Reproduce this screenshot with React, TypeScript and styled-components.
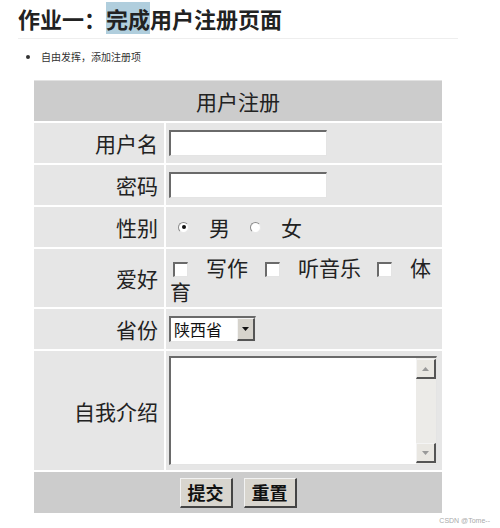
import styled, { createGlobalStyle } from "styled-components";

const GlobalStyle = createGlobalStyle`
	body {
		margin: 0;
		background: #fff;
		font-family: "Noto Sans CJK SC", "Noto Sans", sans-serif;
		color: #222;
	}
`;

const Page = styled.div`
	width: 500px;
	height: 528px;
	overflow: hidden;
`;

const Article = styled.div`
	width: 440px;
	padding-left: 18px;
`;

const Title = styled.h1`
	margin: 0;
	padding: 3px 0 5px;
	font-size: 22px;
	line-height: 30px;
	font-weight: 700;
	color: #222;
	border-bottom: 1px solid #eee;
`;

const Mark = styled.span`
	background: #b0cedd;
`;

const List = styled.ul`
	margin: 11px 0 0;
	padding-left: 23px;
	font-size: 10px;
	line-height: 14px;
	color: #333;
`;

const Form = styled.div`
	display: grid;
	grid-template-columns: 130px 276px;
	grid-template-rows: 40px 40px 40px 40px 58px 40px 119px 41px;
	gap: 2px;
	width: 408px;
	margin: 16px 0 0 34px;
	border-top: 1px solid #e2e2e2;
	font-size: 21px;
	color: #222;
`;

const Band = styled.div`
	grid-column: 1 / -1;
	background: #cccccc;
	display: flex;
	align-items: center;
	justify-content: center;
	gap: 11px;
`;

const Label = styled.div`
	background: #e6e6e6;
	display: flex;
	align-items: center;
	justify-content: flex-end;
	padding-right: 6px;
`;

const Field = styled.div`
	background: #e6e6e6;
	display: flex;
	align-items: center;
	padding-left: 3px;
`;

const FlowField = styled.div`
	background: #e6e6e6;
	padding: 6px 4px 0 4px;
	line-height: 24px;
`;

const TextBox = styled.div<{ $w: number; $h: number }>`
	box-sizing: border-box;
	width: ${(p) => p.$w}px;
	height: ${(p) => p.$h}px;
	background: #fff;
	border-style: solid;
	border-width: 2px 1px 1px 2px;
	border-color: #6a6a6a #e4e4e4 #e4e4e4 #6a6a6a;
	display: flex;
`;

const Radio = styled.span<{ $on?: boolean; $ml: number }>`
	box-sizing: border-box;
	width: 11px;
	height: 11px;
	border-radius: 50%;
	background: #fff;
	border: 1px solid #8a8a8a;
	border-right-color: #e8e8e8;
	border-bottom-color: #e8e8e8;
	margin: 0 20px 0 ${(p) => p.$ml}px;
	display: flex;
	align-items: center;
	justify-content: center;
	&::after {
		content: "";
		width: 4px;
		height: 4px;
		border-radius: 50%;
		background: ${(p) => (p.$on ? "#111" : "transparent")};
	}
`;

const Check = styled.span<{ $ml: number }>`
	display: inline-block;
	box-sizing: border-box;
	width: 15px;
	height: 15px;
	vertical-align: -1px;
	background: #fff;
	border-style: solid;
	border-width: 2px 1px 1px 2px;
	border-color: #6a6a6a #e4e4e4 #e4e4e4 #6a6a6a;
	margin: 0 18px 0 ${(p) => p.$ml}px;
`;

const SelectValue = styled.span`
	flex: 1;
	font-size: 16px;
	line-height: 22px;
	padding-left: 3px;
	color: #111;
`;

const RaisedBtn = styled.span`
	box-sizing: border-box;
	width: 18px;
	height: 20px;
	background: #d6d3cc;
	border-style: solid;
	border-width: 1px 2px 2px 1px;
	border-color: #f4f4f4 #555 #555 #f4f4f4;
	display: flex;
	align-items: center;
	justify-content: center;
`;

const SelectBtn = styled(RaisedBtn)`
	height: 100%;
`;

const TextAreaBody = styled.div`
	flex: 1;
`;

const ScrollBar = styled.div`
	width: 20px;
	background: #ecebe8;
	display: flex;
	flex-direction: column;
	justify-content: space-between;
	padding: 1px 0;
`;

const ScrollBtn = styled(RaisedBtn)`
	width: 20px;
	background: #e9e7e2;
`;

const Button = styled.span`
	box-sizing: border-box;
	width: 53px;
	height: 30px;
	background: #d8d5ce;
	border-style: solid;
	border-width: 1px 2px 2px 1px;
	border-color: #f2f2f2 #444 #444 #f2f2f2;
	display: flex;
	align-items: center;
	justify-content: center;
	font-size: 18px;
	font-weight: 700;
	color: #111;
`;

const Watermark = styled.div`
	text-align: right;
	padding: 3px 10px 0 0;
	font-size: 7px;
	line-height: 10px;
	color: #aaa;
	font-family: "Liberation Sans", sans-serif;
`;

function Arrow({ up, color }: { up?: boolean; color: string }) {
	return (
		<svg width="7" height="4" viewBox="0 0 7 4">
			<path d={up ? "M0 4 L3.5 0 L7 4 Z" : "M0 0 L3.5 4 L7 0 Z"} fill={color} />
		</svg>
	);
}

export default function App() {
	return (
		<Page>
			<GlobalStyle />
			<Article>
				<Title>
					作业一：<Mark>完成</Mark>用户注册页面
				</Title>
				<List>
					<li>自由发挥，添加注册项</li>
				</List>
			</Article>
			<Form>
				<Band>用户注册</Band>

				<Label>用户名</Label>
				<Field>
					<TextBox $w={158} $h={26} />
				</Field>

				<Label>密码</Label>
				<Field>
					<TextBox $w={158} $h={26} />
				</Field>

				<Label>性别</Label>
				<Field>
					<Radio $on $ml={9} />
					<span>男</span>
					<Radio $ml={20} />
					<span>女</span>
				</Field>

				<Label>爱好</Label>
				<FlowField>
					<Check $ml={3} />
					<span>写作</span>
					<Check $ml={17} />
					<span>听音乐</span>
					<Check $ml={16} />
					<span>体</span>
					<span>育</span>
				</FlowField>

				<Label>省份</Label>
				<Field>
					<TextBox $w={87} $h={26}>
						<SelectValue>陕西省</SelectValue>
						<SelectBtn>
							<Arrow color="#111" />
						</SelectBtn>
					</TextBox>
				</Field>

				<Label>自我介绍</Label>
				<Field>
					<TextBox $w={268} $h={109}>
						<TextAreaBody />
						<ScrollBar>
							<ScrollBtn>
								<Arrow up color="#999" />
							</ScrollBtn>
							<ScrollBtn>
								<Arrow color="#999" />
							</ScrollBtn>
						</ScrollBar>
					</TextBox>
				</Field>

				<Band>
					<Button>提交</Button>
					<Button>重置</Button>
				</Band>
			</Form>
			<Watermark>CSDN @Tome--</Watermark>
		</Page>
	);
}
